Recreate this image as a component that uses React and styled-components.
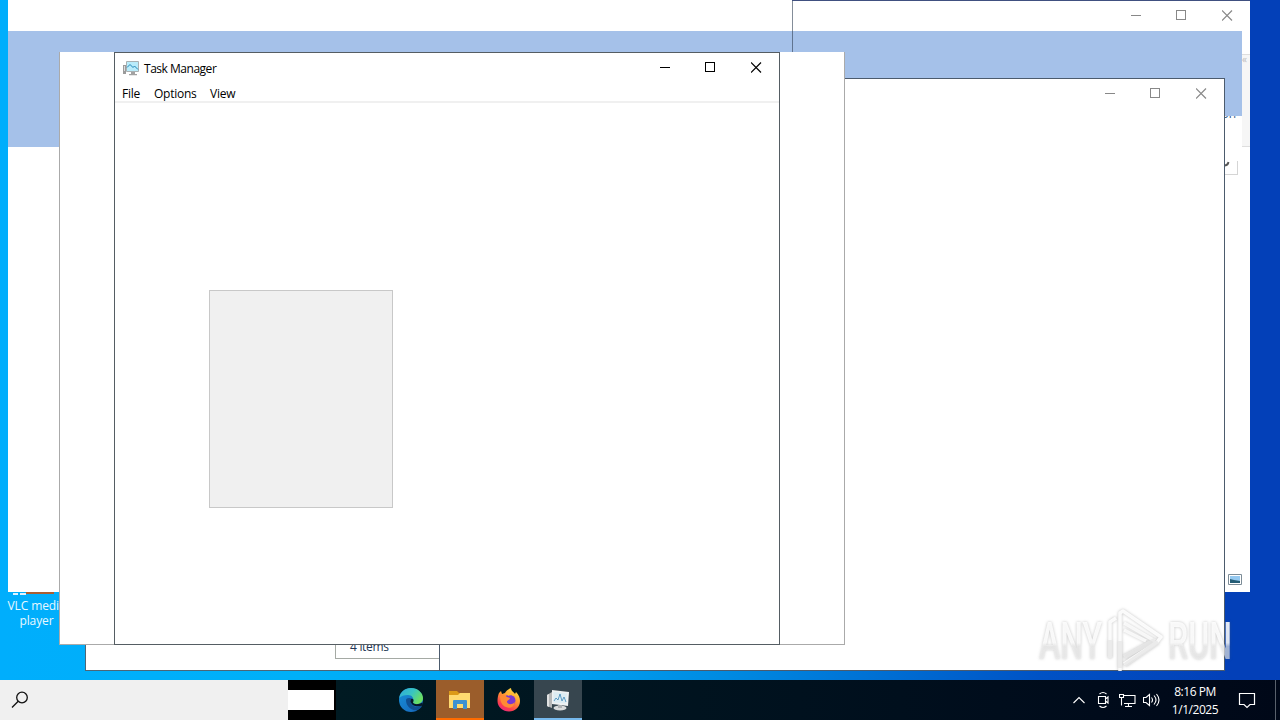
import React from 'react'
import styled, { createGlobalStyle } from 'styled-components'

const GlobalStyle = createGlobalStyle`
    * {
        box-sizing: border-box;
    }
    body {
        margin: 0;
        overflow: hidden;
        font-family: 'Open Sans', 'Noto Sans', sans-serif;
        font-size: 12px;
    }
    svg {
        display: block;
        flex-shrink: 0;
    }
`;

function CaptionButtons() {
    return (
        <CaptionsStyled>
            <svg width="11" height="11" viewBox="0 0 11 11"><path d="M1 5.500h10" /></svg>
            <svg width="11" height="11" viewBox="0 0 11 11"><path d="M.5 .5h9v9h-9z" /></svg>
            <svg width="11" height="11" viewBox="0 0 11 11"><path d="M0 .5l10 10M10 .5l-10 10" /></svg>
        </CaptionsStyled>
    )
}

function TaskManagerIcon() {
    return (
        <svg width="16" height="16" viewBox="0 0 16 16">
            <path d="M0 5h3v9H0z" fill="#9b9b9b" />
            <path d="M1 6h1v5H1z" fill="#ddd" />
            <path d="M3.500 1.500h12v10h-12z" fill="#b9ecfb" stroke="#a9b1b3" />
            <path d="M4 7.500l3-3 3 3 1.500-1.500L15 9.500" fill="none" stroke="#2185b5" />
            <path d="M8 12h4v2H8zM6 14h8v1.200H6z" fill="#a2a2a2" />
        </svg>
    )
}

function Edge() {
    return (
        <svg width="26" height="26" viewBox="0 0 26 26">
            <defs>
                <linearGradient id="edgeTop" x1="0" y1="0" x2="1" y2=".5">
                    <stop offset="0" stopColor="#2fa8dc" />
                    <stop offset=".55" stopColor="#38c4c2" />
                    <stop offset="1" stopColor="#6bdf61" />
                </linearGradient>
                <linearGradient id="edgeLow" x1="0" y1="0" x2="1" y2="1">
                    <stop offset="0" stopColor="#1690d8" />
                    <stop offset="1" stopColor="#1764ba" />
                </linearGradient>
            </defs>
            <circle cx="13" cy="13" r="12" fill="url(#edgeLow)" />
            <path d="M1.200 11C2 5 7 1 13 1c7 0 12 5 12 10 0 4-3 6-6 6-4 0-5-1-4-3 1-3-1-6-5-6-4 0-7 1-8.800 3z" fill="url(#edgeTop)" />
            <path d="M8 13c0 6 5 11 11 10 2-.5 4-2 5-4-6 2-11 0-11-4 0-1 .3-2 1-3-2-2-6-1-6 1z" fill="#104f91" />
            <path d="M13 12c2-1 3.500 1 2 3.500 1 2 5 2.500 9.500 0v3c-5 2-11 .5-12-4z" fill="#06182a" />
        </svg>
    )
}

function Folder() {
    return (
        <svg width="22" height="20" viewBox="0 0 22 20">
            <path d="M0 1h8l2 2h11v6H0z" fill="#dc9a18" />
            <path d="M0 5h9l2-2h10v15H0z" fill="#ffda70" />
            <path d="M4 18v-7q0-1 1-1h12q1 0 1 1v8h-4v-5H8v5H4z" fill="#3e91d1" />
        </svg>
    )
}

function Firefox() {
    return (
        <svg width="24" height="24" viewBox="0 0 24 24">
            <defs>
                <linearGradient id="foxFire" x1=".8" y1="0" x2=".25" y2="1">
                    <stop offset="0" stopColor="#ffe642" />
                    <stop offset=".45" stopColor="#ff9432" />
                    <stop offset=".8" stopColor="#fb3b50" />
                    <stop offset="1" stopColor="#e72a82" />
                </linearGradient>
            </defs>
            <path d="M2 5l2-2 1 3 3-1C9 3 11 1 14 0c0 3 3 4 4 6l1-2c3 3 4 6 4 9 0 6-5 10.500-11 10.500S.5 19 .5 13C.5 10 1 7 2 5z" fill="url(#foxFire)" />
            <circle cx="12.500" cy="12.500" r="6" fill="#7938d1" />
            <path d="M3 8c3-2 5-1 7 1l3 1c0 2-3 2-3 4 1 3 5 3 8 0-1 5-5 7-9 5-4-1-6-6-6-11z" fill="#ff8b34" />
            <path d="M9 5c4-1 8 0 9 4-3-2-5-2-7-1z" fill="#ffb632" />
        </svg>
    )
}

function TaskManagerLarge() {
    return (
        <svg width="24" height="23" viewBox="0 0 24 23">
            <path d="M1 6l5-3v16l-5-2z" fill="#b5b7b8" />
            <path d="M1 6l2-1v13l-2-1z" fill="#e1e2e2" />
            <path d="M6 1l17 2-1 14-16-2z" fill="#eef1f2" />
            <path d="M7.500 3l13.500 1.500-1 10-12.500-1z" fill="#dcecf3" />
            <path d="M8 12l2-3 2 2 2-6 2 7 2-4 2 5" fill="none" stroke="#3c87b8" strokeWidth=".8" />
            <ellipse cx="14" cy="19" rx="6.500" ry="2.500" fill="#d8dadb" />
            <path d="M12 16h4v3h-4z" fill="#adb0b2" />
        </svg>
    )
}

function Watermark() {
    return (
        <WatermarkStyled width="204" height="68" viewBox="0 0 204 68">
            <defs>
                <linearGradient id="wmFill" x1="0" y1="0" x2="0" y2="1">
                    <stop offset="0" stopColor="#fff" stopOpacity=".9" />
                    <stop offset=".52" stopColor="#fff" stopOpacity=".85" />
                    <stop offset=".58" stopColor="#eee" stopOpacity=".65" />
                    <stop offset="1" stopColor="#eaeaea" stopOpacity=".65" />
                </linearGradient>
            </defs>
            <g fill="url(#wmFill)" fontFamily="Roboto, sans-serif" fontSize="52" fontWeight="500">
                <text x="5" y="52" textLength="63" lengthAdjust="spacingAndGlyphs">ANY</text>
                <text x="134" y="52" textLength="64" lengthAdjust="spacingAndGlyphs">RUN</text>
            </g>
            <g fill="none" strokeLinejoin="round">
                <path d="M76 51V15l6-4M86 64V6l3-2 38 26-4 5L90 57" stroke="#fff" strokeWidth="3.500" opacity=".9" />
                <path d="M90 16l31 18M90 23l22 11" stroke="#fff" strokeWidth="3.500" opacity=".8" />
                <path d="M76 33v18M86 34v27M90 50l31-17M91 58l33-23" stroke="#e9e9e9" strokeWidth="4.500" opacity=".85" />
            </g>
        </WatermarkStyled>
    )
}

function Taskbar() {
    return (
        <TaskbarStyled>
            <SearchBox>
                <svg width="18" height="18" viewBox="0 0 18 18" fill="none" stroke="#111" strokeWidth="1.300">
                    <circle cx="11" cy="6.500" r="5.300" />
                    <path d="M7.200 10.300L1 16.500" />
                </svg>
            </SearchBox>
            <BlankSlot><span /></BlankSlot>
            <Apps>
                <AppButton><Edge /></AppButton>
                <AppButton $bg="#9b5d2b" $line="#ff6b00"><Folder /></AppButton>
                <AppButton><Firefox /></AppButton>
                <AppButton $bg="#37464f" $line="#76b9ed"><TaskManagerLarge /></AppButton>
            </Apps>
            <Tray>
                <svg width="12" height="16" viewBox="0 0 12 16"><path d="M.5 11L6 5.500l5.500 5.500" /></svg>
                <svg width="12" height="18" viewBox="0 0 12 18"><path d="M2.500 3Q6 0 9.500 3M2.500 15Q6 18 9.500 15M1.500 5.500h7v7h-7zM8.500 8l2.500-2v6l-2.500-2" /></svg>
                <svg width="17" height="16" viewBox="0 0 17 16"><path d="M5 3.500h11v8H5M.5 2.500h4v3h-4zM2.500 5.500v8M6 14.500h7M9.500 11.500v3" /></svg>
                <svg width="18" height="16" viewBox="0 0 18 16"><path d="M.5 5.500h2.500l3.500-3v11l-3.500-3H.5zM8.500 5.500q2 2.500 0 5M11 3.500q4 4.500 0 9M13.500 2q5 6 0 12" /></svg>
            </Tray>
            <Clock>
                <span>8:16 PM</span>
                <span>1/1/2025</span>
            </Clock>
            <Notifications>
                <svg width="18" height="18" viewBox="0 0 18 18"><path d="M1.500 2.500h15v11H12l-3 3-3-3H1.500z" /></svg>
            </Notifications>
        </TaskbarStyled>
    )
}

function App() {
    return (
        <Desktop>
            <GlobalStyle />
            <DesktopIcon>
                <svg width="46" height="4" viewBox="0 0 46 4">
                    <path d="M5 1h5v2H5zM12 1h6v2h-6z" fill="#dff2ff" />
                    <path d="M18 0h28v2H18z" fill="#a95e32" />
                </svg>
                <span>VLC media<br />player</span>
            </DesktopIcon>

            <Window $x={8} $y={0} $w={785} $h={592} $edges="0">
                <Band $top={31} $height={116} />
            </Window>
            <Window $x={792} $y={0} $w={458} $h={592} $border="#405080" $faded $edges="1px 0 0 0">
                <Seam />
                <TitleBar><CaptionButtons /></TitleBar>
                <RibbonLabel>on</RibbonLabel>
                <Band $top={1} $height={85} $right={8} />
                <RibbonEdge>«</RibbonEdge>
                <AddressEdge>
                    <svg width="5" height="6" viewBox="0 0 5 6"><path d="M0 4.500Q3 4 3.500 1" fill="none" stroke="#555" strokeWidth="1.800" /></svg>
                </AddressEdge>
                <ViewToggle>
                    <svg width="14" height="11" viewBox="0 0 14 11">
                        <path d="M.5 .5h13v10H.5z" fill="#fff" stroke="#7c8c97" />
                        <path d="M2 2h10v7H2z" fill="#95c9f0" />
                        <path d="M2 5l4 1 6 1v2H2z" fill="#245c75" />
                    </svg>
                </ViewToggle>
            </Window>
            <Window $x={85} $y={600} $w={355} $h={71} $border="#4d6676">
                <StatusText>4 items</StatusText>
            </Window>
            <Window $x={439} $y={78} $w={786} $h={593} $border="#4c5b6d" $faded>
                <TitleBar><CaptionButtons /></TitleBar>
            </Window>
            <Window $x={59} $y={52} $w={786} $h={593} $border="#aaa" $edges="0 1px 1px 1px" />
            <Window $x={114} $y={52} $w={666} $h={593} $border="#555d63">
                <TitleBar>
                    <TaskManagerIcon />
                    <Title>Task Manager</Title>
                    <CaptionButtons />
                </TitleBar>
                <MenuBar>
                    <MenuItem $w={32}>File</MenuItem>
                    <MenuItem $w={56}>Options</MenuItem>
                    <MenuItem $w={30}>View</MenuItem>
                </MenuBar>
                <Panel />
            </Window>
            <Watermark />
            <Taskbar />
        </Desktop>
    )
}

const Desktop = styled.div`
    position: relative;
    width: 1280px;
    height: 720px;
    overflow: hidden;
    display: flex;
    flex-direction: column;
    justify-content: flex-end;
    background: linear-gradient(90deg, #00aefc 0, #00b0f8 300px, #009ff0 580px, #0088e0 740px, #0068d0 920px, #0052c5 1040px, #0340b8 1230px, #0340b8 100%);
`;

const DesktopIcon = styled.div`
    position: absolute;
    left: 0;
    top: 592px;
    width: 66px;
    padding-left: 7px;
    color: #e8f8ff;
    line-height: 15px;
    text-align: center;
    span {
        display: block;
        margin-top: 2px;
        white-space: nowrap;
        letter-spacing: -0.1px;
    }
    svg {
        margin-left: 1px;
    }
`;

/* desktop windows sit freely over each other */
const Window = styled.div`
    position: absolute;
    left: ${p => p.$x}px;
    top: ${p => p.$y}px;
    width: ${p => p.$w}px;
    height: ${p => p.$h}px;
    background: #fff;
    border: solid ${p => p.$border};
    border-width: ${p => p.$edges || '1px'};
    display: flow-root;
    isolation: isolate;
    overflow: hidden;
    color: ${p => p.$faded ? '#888' : '#000'};
`;

const TitleBar = styled.div`
    display: flex;
    align-items: center;
    height: 29px;
    padding-left: 8px;
`;

const Title = styled.span`
    margin-left: 5px;
    padding-top: 2px;
    letter-spacing: -0.48px;
`;

const CaptionsStyled = styled.div`
    display: flex;
    gap: 35px;
    margin-left: auto;
    padding-right: 17px;
    svg {
        fill: none;
        stroke: currentColor;
        shape-rendering: crispEdges;
    }
    svg:last-child {
        stroke-width: 1.2;
        shape-rendering: auto;
    }
`;

const MenuBar = styled.div`
    display: flex;
    align-items: center;
    height: 21px;
    padding: 3px 0 0 7px;
    border-bottom: 2px solid #f0f0f0;
`;

const MenuItem = styled.span`
    width: ${p => p.$w}px;
    white-space: nowrap;
    letter-spacing: -0.25px;
`;

const Panel = styled.div`
    width: 184px;
    height: 218px;
    margin: 187px 0 0 94px;
    background: #f0f0f0;
    border: 1px solid #c8c8c8;
`;

const Band = styled.div`
    position: relative;
    height: ${p => p.$height}px;
    margin: ${p => p.$top}px ${p => p.$right || 0}px 0 0;
    background: #a5c1e9;
`;

const Seam = styled.div`
    position: absolute;
    z-index: 1;
    left: 0;
    top: 0;
    width: 1px;
    height: 100%;
    background: rgba(50, 65, 85, 0.6);
`;

const RibbonEdge = styled.div`
    position: absolute;
    right: 0;
    top: 53px;
    width: 8px;
    height: 93px;
    border: solid #dedede;
    border-width: 1px 0;
    background: #f6f6f6;
    color: #bbb;
    font-size: 10px;
    line-height: 8px;
`;

const RibbonLabel = styled.div`
    position: absolute;
    right: 14px;
    top: 105px;
    color: #365d83;
    line-height: 16px;
`;

const AddressEdge = styled.div`
    position: absolute;
    right: 12px;
    top: 160px;
    width: 13px;
    height: 14px;
    border: solid #d5d5d5;
    border-width: 0 1px 1px 0;
`;

const ViewToggle = styled.div`
    position: absolute;
    right: 8px;
    bottom: 7px;
`;

const StatusText = styled.div`
    width: 105px;
    height: 58px;
    margin-left: 249px;
    padding: 37px 0 0 14px;
    border: solid #a5aaa4;
    border-width: 0 0 1px 1px;
    color: #243756;
    line-height: 18px;
    letter-spacing: -0.3px;
`;

const WatermarkStyled = styled.svg`
    position: absolute;
    left: 1034px;
    top: 607px;
    filter: drop-shadow(0 0 1.5px rgba(90, 90, 90, 0.4));
`;

const TaskbarStyled = styled.div`
    position: relative;
    display: flex;
    height: 40px;
    background: linear-gradient(90deg, #001a22 336px, #00111e 800px, #000b1b 1100px, #000818);
    color: #fff;
`;

const SearchBox = styled.div`
    display: flex;
    align-items: center;
    width: 288px;
    padding-left: 11px;
    background: #f0f0f0;
`;

const BlankSlot = styled.div`
    display: flex;
    align-items: center;
    width: 48px;
    background: #000;
    span {
        width: 46px;
        height: 20px;
        background: #fff;
    }
`;

const Apps = styled.div`
    display: flex;
    margin-left: 50px;
`;

const AppButton = styled.div`
    display: flex;
    align-items: center;
    justify-content: center;
    width: ${p => p.$bg ? 48 : 50}px;
    background: ${p => p.$bg || 'none'};
    ${p => p.$line && `box-shadow: inset 0 -2px ${p.$line};`}
`;

const Tray = styled.div`
    display: flex;
    align-items: center;
    gap: 9px;
    margin-left: auto;
    svg {
        fill: none;
        stroke: #fff;
        stroke-width: 1.1;
    }
    svg:first-child {
        margin-right: 3px;
    }
    svg:nth-child(2) {
        margin-right: 1px;
    }
    svg:last-child {
        margin-left: -2px;
    }
`;

const Clock = styled.div`
    display: flex;
    flex-direction: column;
    align-items: center;
    justify-content: center;
    width: 70px;
    margin-left: -1px;
    padding-top: 1px;
    line-height: 18px;
    letter-spacing: -0.45px;
`;

const Notifications = styled.div`
    display: flex;
    align-items: center;
    width: 46px;
    margin-right: 4px;
    padding-left: 8px;
    border-right: 1px solid #59616c;
    svg {
        fill: none;
        stroke: #fff;
        stroke-width: 1.2;
    }
`;

export default App;
